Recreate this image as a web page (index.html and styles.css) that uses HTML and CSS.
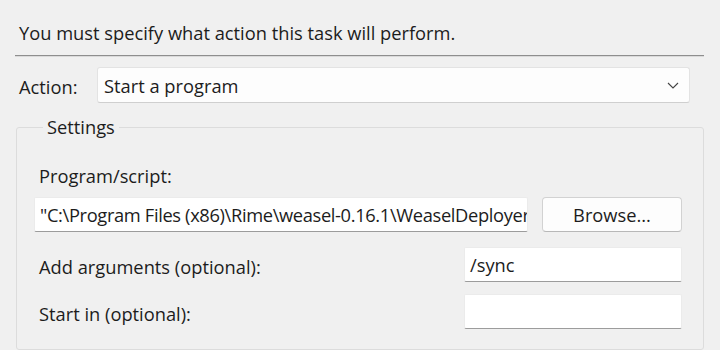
FILE: index.html
```html
<!DOCTYPE html>
<html lang="en">
<head>
  <meta charset="UTF-8" />
  <title>Edit Action</title>
  <link rel="stylesheet" href="styles.css">
</head>
<body>
  <p class="intro">You must specify what action this task will perform.</p>
  <div class="separator"></div>

  <div class="action-row">
    <label class="action-label">Action:</label>
    <div class="select">
      <span>Start a program</span>
      <svg class="chevron" width="12" height="7" viewBox="0 0 12 7">
        <polyline points="1,1 6,6 11,1" fill="none" stroke="#444" stroke-width="1.1" />
      </svg>
    </div>
  </div>

  <fieldset class="settings">
    <legend>Settings</legend>

    <div class="field-label">Program/script:</div>
    <div class="program-row">
      <div class="textbox path">"C:\Program Files (x86)\Rime\weasel-0.16.1\WeaselDeployer.exe"</div>
      <button class="browse">Browse...</button>
    </div>

    <div class="opt-row">
      <div class="field-label">Add arguments (optional):</div>
      <div class="textbox">/sync</div>
    </div>

    <div class="opt-row">
      <div class="field-label">Start in (optional):</div>
      <div class="textbox"></div>
    </div>
  </fieldset>
</body>
</html>
```

FILE: styles.css
```css
body {
  margin: 0;
  background-color: #f0f0f0;
  color: #1c1c1c;
  font-family: 'Open Sans', 'Noto Sans', sans-serif;
  font-size: 18.3px;
  overflow: hidden;
}

.intro {
  margin: 0;
  padding: 21px 0 0 19px;
  line-height: 24px;
}

.separator {
  margin: 10px 16px 0 15px;
  height: 1px;
  background: #8e8e8e;
  border-bottom: 1px solid #dadada;
}

.action-row {
  display: flex;
  align-items: center;
  margin-top: 10px;
  padding-left: 19px;
}

.action-label {
  width: 78px;
  padding-top: 2px;
}

.select {
  width: 593px;
  height: 36px;
  box-sizing: border-box;
  background: #fdfdfd;
  border: 1px solid #e3e3e3;
  border-bottom-color: #cfcfcf;
  border-radius: 3px;
  display: flex;
  align-items: center;
  justify-content: space-between;
  padding: 0 10px 0 6px;
}

.chevron {
  margin-top: 1px;
}

/* Settings group */
.settings {
  margin: 14px 16px 0 16px;
  padding: 0 21px 20px 17px;
  border: 1px solid #dcdcdc;
  border-radius: 3px;
  min-width: 0;
}

.settings legend {
  margin-left: 9px;
  padding: 0 4px;
  line-height: 20px;
}

.field-label {
  padding-left: 5px;
  line-height: 22px;
}

.settings > .field-label {
  margin-top: 28px;
}

.program-row {
  display: flex;
  gap: 14px;
  margin-top: 10px;
}

.textbox {
  flex: 1;
  min-width: 0;
  height: 35px;
  box-sizing: border-box;
  background: #fff;
  border: 1px solid #ebebeb;
  border-bottom: 1px solid #9c9c9c;
  border-radius: 2px;
  padding: 0 5px;
  line-height: 33px;
  white-space: nowrap;
  overflow: hidden;
}

.textbox.path {
  letter-spacing: -0.35px;
}

.browse {
  flex: none;
  width: 140px;
  height: 35px;
  background: #fdfdfd;
  border: 1px solid #d2d2d2;
  border-bottom-color: #b8b8b8;
  border-radius: 4px;
  font-family: inherit;
  font-size: inherit;
  color: inherit;
  padding: 0;
}

.opt-row {
  display: grid;
  grid-template-columns: 1fr 218px;
  align-items: center;
  margin-top: 15px;
}

.opt-row + .opt-row {
  margin-top: 12px;
}

.opt-row .field-label {
  padding-top: 5px;
}

.opt-row .textbox {
  width: 218px;
}
```
